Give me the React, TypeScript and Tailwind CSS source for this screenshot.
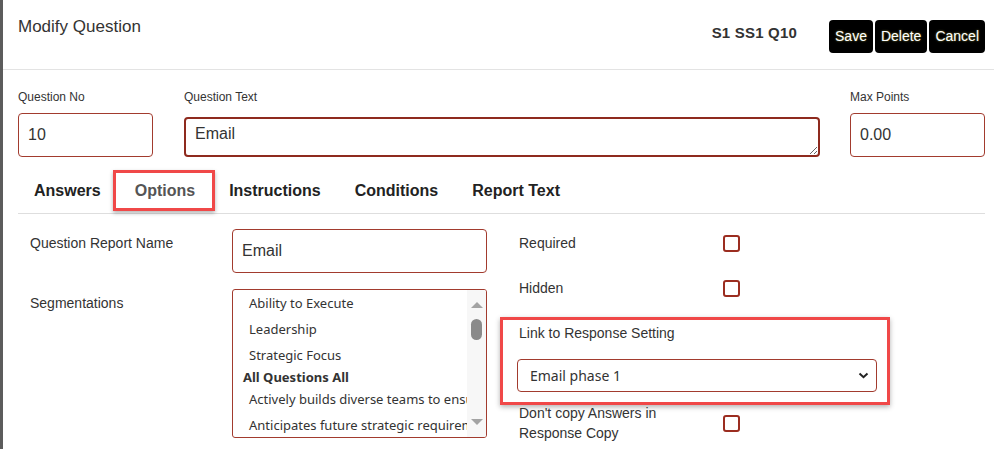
import React from "react"

const ARIAL = "font-['Liberation_Sans',Arial,sans-serif]"
const NOTO = "font-['Noto_Sans',sans-serif]"

function Checkbox() {
  return <div className="w-[17px] h-[17px] border-2 border-[#9b2d20] rounded-[3px] bg-white shrink-0" />
}

function SegmentList() {
  const items = ["Ability to Execute", "Leadership", "Strategic Focus"]
  const items2 = [
    "Actively builds diverse teams to ensure varied perspectives",
    "Anticipates future strategic requirements",
  ]
  return (
    <div className="w-[255px] h-[149px] border border-[#a23b2e] rounded-[3px] flex overflow-hidden bg-white">
      <div className={`flex-1 overflow-hidden whitespace-nowrap text-[13px] text-[#333] ${NOTO}`}>
        {items.map((t) => (
          <div key={t} className="h-[26px] leading-[26px] pl-[16px]">
            {t}
          </div>
        ))}
        <div className="h-[18px] leading-[18px] pl-[10px] font-bold">All Questions All</div>
        {items2.map((t) => (
          <div key={t} className="h-[26px] leading-[26px] pl-[16px]">
            {t}
          </div>
        ))}
      </div>
      <div className="w-[19px] bg-[#f7f7f7] flex flex-col items-center pt-[12px] pb-[12px]">
        <div className="w-0 h-0 border-l-[6px] border-r-[6px] border-b-[6px] border-l-transparent border-r-transparent border-b-[#a3a3a3]" />
        <div className="mt-[11px] w-[11px] h-[21px] rounded-full bg-[#8a8a8a]" />
        <div className="flex-1" />
        <div className="w-0 h-0 border-l-[6px] border-r-[6px] border-t-[6px] border-l-transparent border-r-transparent border-t-[#a3a3a3]" />
      </div>
    </div>
  )
}

export default function App() {
  return (
    <div className={`flex min-h-[449px] bg-white text-[#333] ${ARIAL}`}>
      <div className="w-[3px] bg-[#5c5c5c] shrink-0" />
      <div className="flex-1">
        {/* header */}
        <div className="h-[70px] border-b border-[#e3e3e3] flex justify-between pl-[15px] pr-[9px]">
          <div className="pt-[17px] text-[17px] leading-[20px] text-[#333]">Modify Question</div>
          <div className="flex items-start">
            <div className="pt-[24px] text-[15px] leading-[17px] font-bold tracking-[0.2px] text-[#333] mr-[32px]">
              S1 SS1 Q10
            </div>
            <div className="pt-[20px] flex gap-[2px]">
              {["Save", "Delete", "Cancel"].map((b) => (
                <button
                  key={b}
                  className="h-[33px] px-[6px] bg-black text-white text-[14px] rounded-[4px] [text-shadow:0_0_2px_#8f8f3c]"
                >
                  {b}
                </button>
              ))}
            </div>
          </div>
        </div>

        <div className="pl-[15px] pr-[9px]">
          {/* top fields */}
          <div className="grid grid-cols-[136px_1fr_135px] gap-x-[30px] pt-[20px]">
            <div>
              <div className="text-[12px] leading-[14px] mb-[9px] text-[#333]">Question No</div>
              <input
                defaultValue="10"
                className="w-[135px] h-[44px] border border-[#a23b2e] rounded-[4px] px-[9px] text-[16px] text-[#333] outline-none"
              />
            </div>
            <div>
              <div className="text-[12px] leading-[14px] mb-[13px] text-[#333]">Question Text</div>
              <textarea
                defaultValue="Email"
                className="block w-full h-[40px] border-2 border-[#8e2a1e] rounded-[4px] px-[9px] pt-[5px] pb-0 leading-[20px] text-[16px] text-[#333] outline-none"
              />
            </div>
            <div>
              <div className="text-[12px] leading-[14px] mb-[9px] text-[#333]">Max Points</div>
              <input
                defaultValue="0.00"
                className="w-[135px] h-[44px] border border-[#a23b2e] rounded-[4px] px-[9px] text-[16px] text-[#333] outline-none"
              />
            </div>
          </div>

          {/* tabs */}
          <div className="mt-[25px] flex gap-[34px] pl-[16px] pb-[13px] border-b border-[#dedede] text-[16px] leading-[18px] font-bold text-[#222]">
            <span>Answers</span>
            <span className="relative text-[#555]">
              Options
              <span className="absolute -left-[22px] -right-[20px] -top-[12px] -bottom-[11px] border-[3px] border-[#f04848] shadow-[0_2px_4px_rgba(0,0,0,0.3)]" />
            </span>
            <span>Instructions</span>
            <span>Conditions</span>
            <span>Report Text</span>
          </div>

          {/* options content */}
          <div className="flex">
            <div className="w-[469px] pl-[12px]">
              <div className="mt-[15px] flex">
                <div className="w-[202px] pt-[6px] text-[14px] leading-[17px]">Question Report Name</div>
                <input
                  defaultValue="Email"
                  className="w-[255px] h-[44px] border border-[#a23b2e] rounded-[4px] px-[9px] text-[16px] text-[#333] outline-none"
                />
              </div>
              <div className="mt-[16px] flex">
                <div className="w-[202px] pt-[6px] text-[14px] leading-[17px]">Segmentations</div>
                <SegmentList />
              </div>
            </div>

            <div className="ml-[13px] w-[390px] text-[14px]">
              <div className="mt-[21px] pl-[19px] flex items-center h-[17px]">
                <div className="w-[204px] leading-[17px]">Required</div>
                <Checkbox />
              </div>
              <div className="mt-[28px] pl-[19px] flex items-center h-[17px]">
                <div className="w-[204px] leading-[17px]">Hidden</div>
                <Checkbox />
              </div>
              <div className="mt-[20px] border-[3px] border-[#f04848] shadow-[0_2px_5px_rgba(0,0,0,0.3)] pt-[5px] pb-[10px]">
                <div className="pl-[16px] leading-[17px]">Link to Response Setting</div>
                <div className="relative mt-[17px] ml-[14px] w-[360px]">
                  <select
                    defaultValue="1"
                    className={`appearance-none w-full h-[33px] border border-[#a23b2e] rounded-[4px] pl-[12px] text-[14px] text-[#333] bg-white outline-none ${NOTO}`}
                  >
                    <option value="1">Email phase 1</option>
                  </select>
                  <svg
                    className="absolute right-[8px] top-[13px] pointer-events-none"
                    width="11"
                    height="7"
                    viewBox="0 0 11 7"
                  >
                    <path d="M1.5 1.5 L5.5 5.2 L9.5 1.5" fill="none" stroke="#222" strokeWidth="2" />
                  </svg>
                </div>
              </div>
              <div className="-mt-[2px] pl-[19px] flex items-center">
                <div className="w-[204px] leading-[20px]">
                  Don't copy Answers in
                  <br />
                  Response Copy
                </div>
                <Checkbox />
              </div>
            </div>
          </div>
        </div>
      </div>
    </div>
  )
}
